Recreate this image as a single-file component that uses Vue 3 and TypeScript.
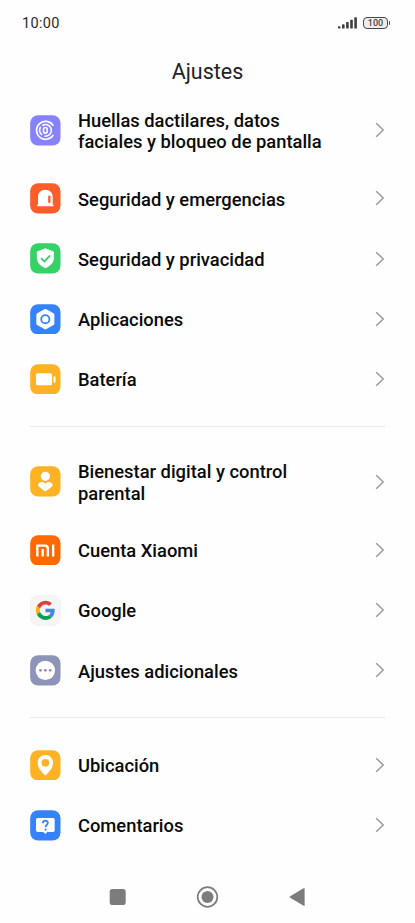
<script setup lang="ts">
interface Item {
  icon: string
  color: string
  lines: string[]
}

const groups: Item[][] = [
  [
    { icon: 'fingerprint', color: '#8582fb', lines: ['Huellas dactilares, datos', 'faciales y bloqueo de pantalla'] },
    { icon: 'alarm', color: '#fd5c2b', lines: ['Seguridad y emergencias'] },
    { icon: 'shield', color: '#36d167', lines: ['Seguridad y privacidad'] },
    { icon: 'apps', color: '#3682fd', lines: ['Aplicaciones'] },
    { icon: 'battery', color: '#ffb223', lines: ['Batería'] },
  ],
  [
    { icon: 'wellbeing', color: '#ffb223', lines: ['Bienestar digital y control', 'parental'] },
    { icon: 'mi', color: '#ff6900', lines: ['Cuenta Xiaomi'] },
    { icon: 'google', color: '#f5f5f5', lines: ['Google'] },
    { icon: 'more', color: '#8e94b8', lines: ['Ajustes adicionales'] },
  ],
  [
    { icon: 'location', color: '#ffb223', lines: ['Ubicación'] },
    { icon: 'feedback', color: '#3682fd', lines: ['Comentarios'] },
  ],
]
</script>

<template>
  <div class="screen">
    <header class="status">
      <span class="clock">10:00</span>
      <span class="indicators">
        <svg class="signal" viewBox="0 0 19 12" fill="#404040">
          <rect x="0" y="9.2" width="2.4" height="2.3" rx=".6" />
          <rect x="4" y="7.3" width="2.6" height="4.2" rx=".6" />
          <rect x="8.1" y="5.1" width="2.6" height="6.4" rx=".6" />
          <rect x="12.2" y="2.7" width="2.6" height="8.8" rx=".6" />
          <rect x="16.3" y="0.2" width="2.6" height="11.3" rx=".6" />
        </svg>
        <span class="charge">100</span>
        <span class="charge-tip"></span>
      </span>
    </header>

    <h1 class="title">Ajustes</h1>

    <main class="list">
      <section v-for="(group, g) in groups" :key="g" class="group">
        <div v-for="item in group" :key="item.icon" class="row" :class="{ tall: item.lines.length > 1 }">
          <svg class="icon" viewBox="0 0 92 92">
            <rect x=".5" y=".5" width="91" height="91" rx="24" :fill="item.color" />
            <g v-if="item.icon === 'fingerprint'" fill="none" stroke="#fff" stroke-width="4.8" stroke-linecap="round">
              <path d="M69 31A27 27 0 1 0 69 61" />
              <path d="M38 30.500C50 24.500 64 33 64 46C64 57 55 63.500 45 63.500" />
              <path d="M31 37C27.500 44 28.500 53 35 58.500" />
              <rect x="40.500" y="37.500" width="11" height="17" rx="5.500" />
            </g>
            <template v-else-if="item.icon === 'alarm'">
              <path d="M24 65V42C24 29 33 20.500 46 20.500S68 29 68 42V65H70.500V69.500H21.500V65Z" fill="#fff" />
              <rect x="54.500" y="38" width="7" height="21.500" rx="1.500" :fill="item.color" />
            </template>
            <template v-else-if="item.icon === 'shield'">
              <path d="M46 16L69 24.500Q71.500 25.500 71.500 28V45C71.500 60 59 70 46 76C33 70 20.500 60 20.500 45V28Q20.500 25.500 23 24.500Z" fill="#fff" />
              <path d="M33 45.500L43 55L60.500 37" fill="none" :stroke="item.color" stroke-width="5.500" />
            </template>
            <template v-else-if="item.icon === 'apps'">
              <path d="M43 15.800Q46 14.100 49 15.800L70.500 28Q73 29.500 73 32.500V58.500Q73 61.500 70.500 63L49 75.200Q46 76.900 43 75.200L21.500 63Q19 61.500 19 58.500V32.500Q19 29.500 21.500 28Z" fill="#fff" />
              <circle cx="46" cy="45.500" r="12.300" fill="none" :stroke="item.color" stroke-width="5.500" />
            </template>
            <g v-else-if="item.icon === 'battery'" fill="#fff">
              <rect x="18" y="28" width="48" height="36" rx="5" />
              <rect x="70.500" y="36.500" width="6" height="20" rx="2.500" />
            </g>
            <g v-else-if="item.icon === 'wellbeing'" fill="#fff">
              <circle cx="46" cy="31" r="13.700" />
              <path d="M46 54C41 47 33 47 27 51C23 54 23 60 27.500 63L43.500 75Q46 76.500 48.500 75L64.500 63C69 60 69 54 65 51C59 47 51 47 46 54Z" />
            </g>
            <g v-else-if="item.icon === 'mi'" fill="none" stroke="#fff" stroke-width="7">
              <path d="M22 64.500V32H45C51 32 53.500 35.500 53.500 41V64.500" />
              <path d="M38 42V64.500M69.500 28.500V64.500" />
            </g>
            <template v-else-if="item.icon === 'google'">
              <rect x=".8" y=".8" width="90.400" height="90.400" rx="24" fill="none" stroke="#ececec" stroke-width="1.600" />
              <g transform="translate(17.500 17) scale(1.200)">
                <path fill="#db4437" d="M24 9.500c3.540 0 6.710 1.220 9.210 3.600l6.850-6.850C35.900 2.380 30.470 0 24 0 14.620 0 6.510 5.380 2.560 13.220l7.980 6.190C12.430 13.720 17.740 9.500 24 9.500z" />
                <path fill="#4285f4" d="M46.980 24.550c0-1.570-.15-3.090-.38-4.550H24v9.020h12.940c-.58 2.960-2.260 5.480-4.780 7.180l7.730 6c4.510-4.180 7.090-10.360 7.090-17.650z" />
                <path fill="#f4b400" d="M10.530 28.590c-.48-1.450-.76-2.990-.76-4.590s.27-3.140.76-4.590l-7.980-6.190C.92 16.460 0 20.120 0 24c0 3.880.92 7.540 2.560 10.780l7.970-6.190z" />
                <path fill="#0f9d58" d="M24 48c6.480 0 11.930-2.130 15.890-5.810l-7.730-6c-2.150 1.450-4.920 2.300-8.160 2.300-6.260 0-11.570-4.220-13.470-9.910l-7.980 6.190C6.510 42.620 14.620 48 24 48z" />
              </g>
            </template>
            <template v-else-if="item.icon === 'more'">
              <circle cx="46" cy="46" r="29" fill="#fff" />
              <g :fill="item.color">
                <circle cx="31.500" cy="46" r="4.300" />
                <circle cx="46" cy="46" r="4.300" />
                <circle cx="60.500" cy="46" r="4.300" />
              </g>
            </template>
            <path
              v-else-if="item.icon === 'location'"
              fill="#fff"
              fill-rule="evenodd"
              d="M46 15C58.500 15 69 25 69 38C69 53 58 64 49 74.500Q46 77.500 43 74.500C34 64 23 53 23 38C23 25 33.500 15 46 15ZM46 27A11.500 11.500 0 1 0 46 50A11.500 11.500 0 1 0 46 27Z"
            />
            <template v-else>
              <path d="M23 24H69Q74 24 74 29V61Q74 66 69 66H52L46 72L40 66H23Q18 66 18 61V29Q18 24 23 24Z" fill="#fff" />
              <path d="M38.500 39.500C38.500 29.500 53.500 29.500 53.500 38.500C53.500 44.500 46.500 45 46.500 52" fill="none" :stroke="item.color" stroke-width="5.500" />
              <circle cx="46.500" cy="58.500" r="3.400" :fill="item.color" />
            </template>
          </svg>
          <span class="label">
            <span v-for="line in item.lines" :key="line" class="line">{{ line }}</span>
          </span>
          <svg class="chevron" viewBox="0 0 10 16">
            <path d="M1.200 1.200L8.200 8L1.200 14.800" fill="none" stroke="#999" stroke-width="1.500" />
          </svg>
        </div>
      </section>
    </main>

    <nav class="nav">
      <svg viewBox="0 0 24 24"><rect x="3.700" y="4" width="16" height="16" rx="2.800" fill="#7c7c7c" /></svg>
      <svg viewBox="0 0 24 24">
        <circle cx="11.500" cy="12" r="9.800" fill="none" stroke="#7c7c7c" stroke-width="1.700" />
        <circle cx="11.500" cy="12" r="6" fill="#7c7c7c" />
      </svg>
      <svg viewBox="0 0 24 24"><path d="M4.200 11.200L17.600 3.200Q18.600 2.800 18.600 4V20Q18.600 21.200 17.600 20.800L4.200 12.800Q3.100 12 4.200 11.200Z" fill="#7c7c7c" /></svg>
    </nav>
  </div>
</template>

<style>
body {
  background: #fefefe;
}
</style>

<style scoped>
.screen {
  width: 415px;
  height: 923px;
  box-sizing: border-box;
  display: flex;
  flex-direction: column;
  overflow: hidden;
  background: #fefefe;
  font-family: Roboto, sans-serif;
  color: #0a0a0a;
}
.status {
  height: 46px;
  flex: none;
  padding: 0 25px 0 22px;
  display: flex;
  align-items: center;
  justify-content: space-between;
}
.clock {
  padding-top: 1px;
  font-size: 14.5px;
  font-weight: 400;
  letter-spacing: 0.35px;
  color: #2a2a2a;
}
.indicators {
  display: flex;
  align-items: center;
}
.signal {
  width: 19px;
  height: 12px;
  margin-right: 6px;
}
.charge {
  box-sizing: border-box;
  width: 25px;
  height: 12px;
  border: 1.5px solid #484848;
  border-radius: 4px;
  background: #ececec;
  font-size: 9px;
  font-weight: 500;
  line-height: 10px;
  text-align: center;
  color: #484848;
}
.charge-tip {
  width: 1.5px;
  height: 4px;
  margin-left: 0.5px;
  border-radius: 0 1px 1px 0;
  background: #484848;
}
.title {
  height: 46px;
  flex: none;
  margin: 0;
  padding-top: 2px;
  box-sizing: border-box;
  line-height: 47px;
  text-align: center;
  font-size: 21.5px;
  font-weight: 400;
  color: #222;
}
.list {
  flex: none;
  height: 764px;
}
.group + .group {
  margin-top: 16.8px;
  padding-top: 17.6px;
  background: linear-gradient(#ebebeb, #ebebeb) 30px 0 / 355px 1px no-repeat;
}
.row {
  height: 60.2px;
  padding: 0 30px;
  display: flex;
  align-items: center;
}
.row.tall {
  height: 76.4px;
}
.icon {
  flex: none;
  width: 30.7px;
  height: 30.7px;
}
.label {
  flex: 1;
  margin-left: 17.3px;
  padding-top: 2px;
  font-size: 18.35px;
  font-weight: 500;
  line-height: 21.5px;
}
.line {
  display: block;
  white-space: nowrap;
}
.chevron {
  flex: none;
  width: 10px;
  height: 16px;
}
.nav {
  flex: none;
  height: 82px;
  margin-left: 106px;
  display: flex;
  align-items: center;
  gap: 66px;
}
.nav svg {
  width: 24px;
  height: 24px;
}
</style>
